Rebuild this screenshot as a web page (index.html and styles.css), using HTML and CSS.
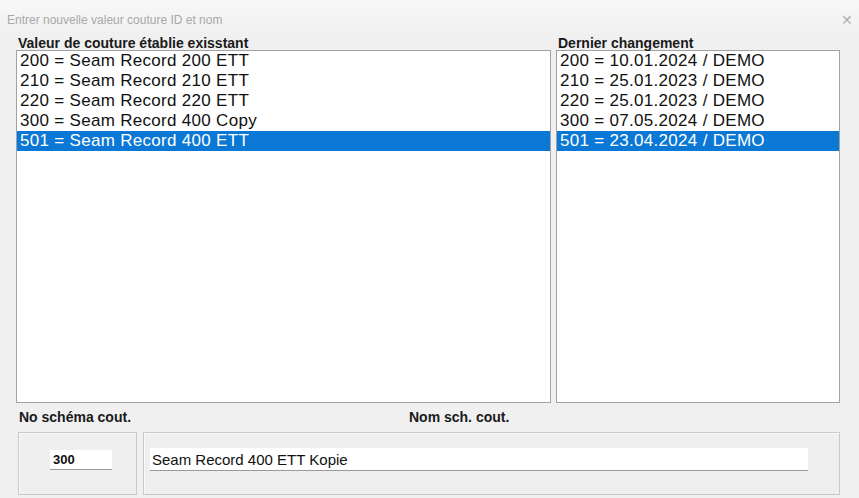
FILE: index.html
```html
<!DOCTYPE html>
<html lang="fr">
<head>
  <meta charset="UTF-8" />
  <title>Entrer nouvelle valeur couture ID et nom</title>
  <link rel="stylesheet" href="styles.css">
</head>
<body>
  <div class="dialog">
    <header class="titlebar">
      <span class="title">Entrer nouvelle valeur couture ID et nom</span>
      <span class="close">&#x2715;</span>
    </header>

    <div class="lists">
      <section class="pane">
        <div class="pane-label">Valeur de couture établie exisstant</div>
        <ul class="listbox">
          <li>200 = Seam Record 200 ETT</li>
          <li>210 = Seam Record 210 ETT</li>
          <li>220 = Seam Record 220 ETT</li>
          <li>300 = Seam Record 400 Copy</li>
          <li class="selected">501 = Seam Record 400 ETT</li>
        </ul>
      </section>
      <section class="pane">
        <div class="pane-label">Dernier changement</div>
        <ul class="listbox">
          <li>200 = 10.01.2024 / DEMO</li>
          <li>210 = 25.01.2023 / DEMO</li>
          <li>220 = 25.01.2023 / DEMO</li>
          <li>300 = 07.05.2024 / DEMO</li>
          <li class="selected">501 = 23.04.2024 / DEMO</li>
        </ul>
      </section>
    </div>

    <div class="fields">
      <div class="field-label">No schéma cout.</div>
      <div class="field-label name-label">Nom sch. cout.</div>
      <div class="field-box">
        <input type="text" class="field-input id-input" value="300" />
      </div>
      <div class="field-box">
        <input type="text" class="field-input name-input" value="Seam Record 400 ETT Kopie" />
      </div>
    </div>
  </div>
</body>
</html>
```

FILE: styles.css
```css
* {
  box-sizing: border-box;
}

body {
  margin: 0;
  background: #f0f0f0;
  font-family: "Liberation Sans", Arial, sans-serif;
  color: #111;
}

.dialog {
  width: 859px;
  height: 498px;
  overflow: hidden;
}

.titlebar {
  height: 36px;
  padding: 4px 6px 0 7px;
  display: flex;
  align-items: center;
  justify-content: space-between;
  background: linear-gradient(#f8f8f8, #f0f0f0);
}

.title {
  font-size: 12px;
  color: #a8a8a8;
}

.close {
  font-size: 14px;
  color: #b0b0b0;
}

.lists {
  display: grid;
  grid-template-columns: 535px 284px;
  column-gap: 5px;
  padding-left: 16px;
}

.pane-label {
  font-size: 14px;
  font-weight: bold;
  line-height: 14px;
  padding-left: 2px;
  color: #1a1a1a;
}

.listbox {
  margin: 0;
  padding: 0;
  list-style: none;
  height: 353px;
  background: #fff;
  border: 1px solid #a2a2a2;
}

.listbox li {
  font-size: 17px;
  line-height: 20px;
  padding-left: 3px;
  letter-spacing: 0.3px;
  white-space: nowrap;
}

.listbox li.selected {
  background: #0a78d4;
  color: #fff;
}

.fields {
  display: grid;
  grid-template-columns: 119px 697px;
  grid-template-rows: 29px 63px;
  column-gap: 6px;
  padding-left: 18px;
}

.field-label {
  font-size: 14px;
  font-weight: bold;
  line-height: 29px;
  padding-left: 1px;
  color: #1a1a1a;
}

.name-label {
  padding-left: 266px;
}

.field-box {
  border: 1px solid #c9c9c9;
  box-shadow: inset 1px 1px 0 #fafafa;
  background: #efefef;
}

.field-input {
  display: block;
  border: none;
  border-bottom: 1px solid #9a9a9a;
  background: #fff;
  font-family: "Liberation Sans", Arial, sans-serif;
  color: #111;
  outline: none;
}

.id-input {
  margin: 17px 0 0 31px;
  width: 62px;
  height: 20px;
  padding: 0 0 0 3px;
  font-size: 13px;
  font-weight: bold;
}

.name-input {
  margin: 15px 0 0 6px;
  width: 658px;
  height: 23px;
  padding: 0 0 0 2px;
  font-size: 15px;
}
```
